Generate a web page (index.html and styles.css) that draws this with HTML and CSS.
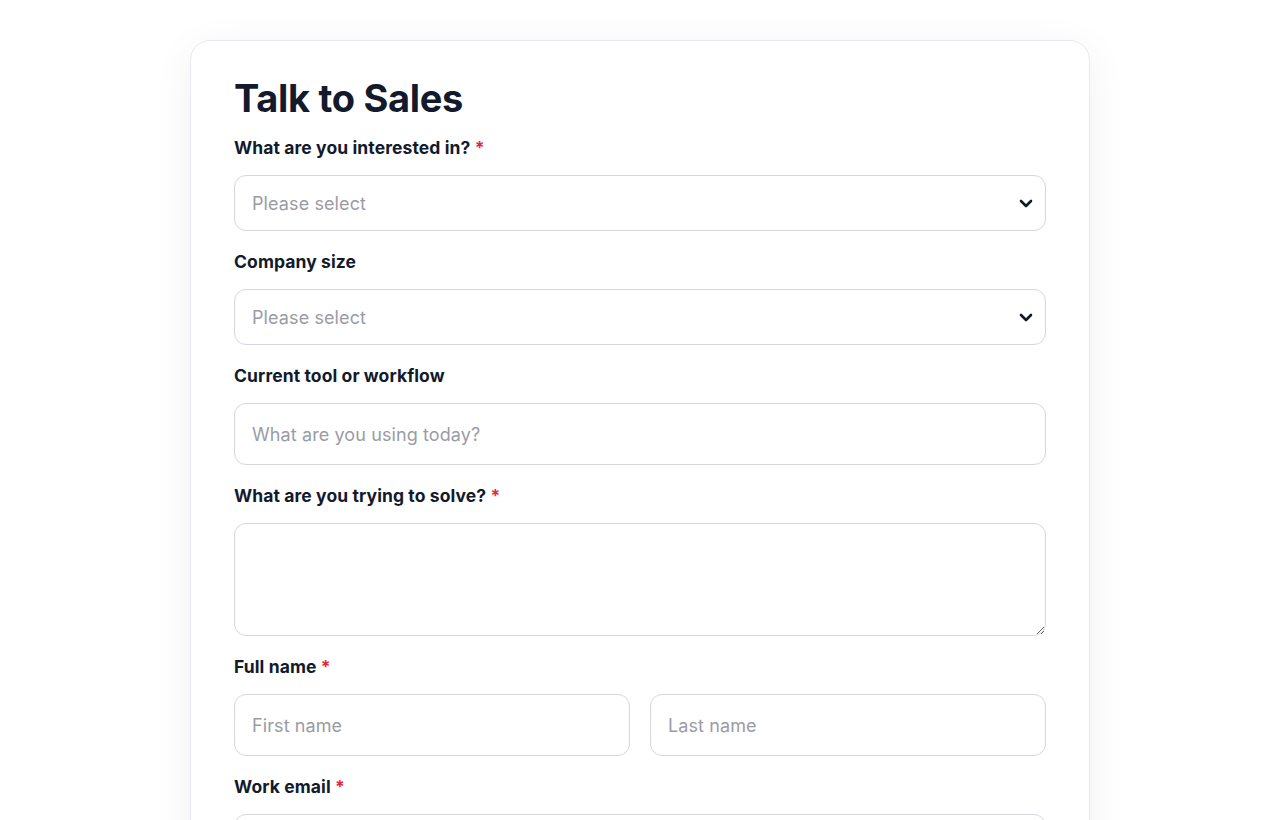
FILE: index.html
```html
<!DOCTYPE html>
<html lang="en">
<head>
    <meta charset="UTF-8">
    <meta name="viewport" content="width=device-width, initial-scale=1.0">
    <title>Talk to Sales</title>
    <link rel="stylesheet" href="styles.css">
</head>
<body>
    <div class="sales-card">
        <h1>Talk to Sales</h1>
        <form class="sales-form">
            <div class="field">
                <label for="interest">What are you interested in? <span class="req">*</span></label>
                <div class="select-wrap">
                    <select id="interest">
                        <option selected disabled>Please select</option>
                        <option>Product demo</option>
                        <option>Pricing</option>
                    </select>
                    <svg class="chevron" width="14" height="9" viewBox="0 0 14 9"><path d="M2 2l5 5 5-5" fill="none" stroke="#111827" stroke-width="2.6" stroke-linecap="round" stroke-linejoin="round"/></svg>
                </div>
            </div>
            <div class="field">
                <label for="size">Company size</label>
                <div class="select-wrap">
                    <select id="size">
                        <option selected disabled>Please select</option>
                        <option>1-10</option>
                        <option>11-50</option>
                    </select>
                    <svg class="chevron" width="14" height="9" viewBox="0 0 14 9"><path d="M2 2l5 5 5-5" fill="none" stroke="#111827" stroke-width="2.6" stroke-linecap="round" stroke-linejoin="round"/></svg>
                </div>
            </div>
            <div class="field">
                <label for="tool">Current tool or workflow</label>
                <input id="tool" type="text" placeholder="What are you using today?">
            </div>
            <div class="field">
                <label for="solve">What are you trying to solve? <span class="req">*</span></label>
                <textarea id="solve"></textarea>
            </div>
            <div class="field">
                <label for="first">Full name <span class="req">*</span></label>
                <div class="name-row">
                    <input id="first" type="text" placeholder="First name">
                    <input id="last" type="text" placeholder="Last name">
                </div>
            </div>
            <div class="field">
                <label for="email">Work email <span class="req">*</span></label>
                <input id="email" type="email">
            </div>
        </form>
    </div>
</body>
</html>
```

FILE: styles.css
```css
body, html {
    margin: 0;
    padding: 0;
    background-color: #ffffff;
    font-family: Inter, "Noto Sans", sans-serif;
    color: #111827;
}

.sales-card {
    width: 900px;
    box-sizing: border-box;
    margin: 40px auto 0;
    padding: 34px 43px 40px;
    border: 1px solid #e8e9ee;
    border-radius: 20px;
    background-color: #ffffff;
    box-shadow: 0 8px 40px rgba(17, 24, 39, 0.06);
}

h1 {
    margin: 0 0 14px;
    font-size: 38px;
    line-height: 47px;
    font-weight: 700;
    letter-spacing: -0.3px;
    color: #121a2c;
}

.sales-form {
    display: flex;
    flex-direction: column;
    gap: 19px;
}

.field label {
    display: block;
    margin-bottom: 15px;
    font-size: 17.5px;
    line-height: 24px;
    font-weight: 650;
    letter-spacing: 0.1px;
    color: #121a2c;
}

.req {
    color: #e5263f;
}

.select-wrap {
    position: relative;
}

select,
input,
textarea {
    display: block;
    width: 100%;
    box-sizing: border-box;
    border: 1px solid #d5d7de;
    border-radius: 12px;
    background-color: #ffffff;
    font-family: Inter, "Noto Sans", sans-serif;
    font-size: 18px;
    letter-spacing: 0.1px;
    color: #111827;
    padding: 0 17px;
    outline: none;
}

select {
    height: 56px;
    appearance: none;
    -webkit-appearance: none;
    color: #9a9ca5;
    cursor: pointer;
}

input {
    height: 62px;
}

input::placeholder {
    color: #9a9ca5;
}

textarea {
    height: 113px;
    padding: 14px 17px;
    resize: vertical;
}

.chevron {
    position: absolute;
    right: 13px;
    top: 24px;
    pointer-events: none;
}

.name-row {
    display: grid;
    grid-template-columns: 1fr 1fr;
    gap: 20px;
}
```
